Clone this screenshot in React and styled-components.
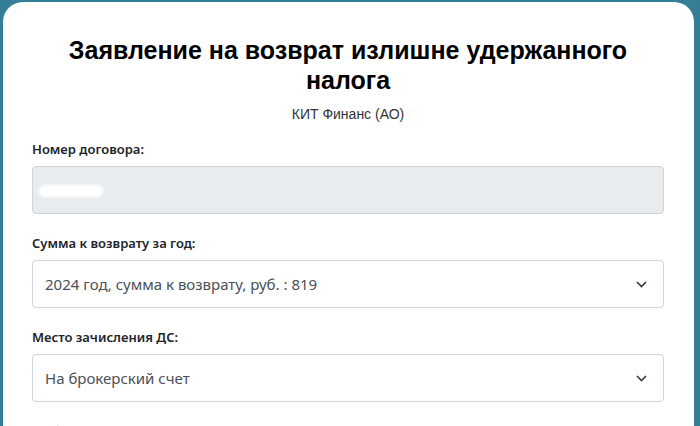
import React from 'react';
import styled, { createGlobalStyle } from 'styled-components';

const GlobalStyle = createGlobalStyle`
  html, body {
    margin: 0;
    padding: 0;
    background: #347f96;
  }
  body {
    font-family: "Noto Sans", "Open Sans", Arial, sans-serif;
  }
`;

const Page = styled.div`
  padding: 2px 6px 0 3px;
`;

const Card = styled.div`
  background: #fff;
  border-radius: 20px 20px 0 0;
  padding: 33px 30px 40px 29px;
  min-height: 600px;
`;

const Title = styled.h1`
  margin: 0;
  font-family: "Liberation Sans", Arial, sans-serif;
  font-size: 25px;
  line-height: 30px;
  font-weight: 700;
  color: #000;
  text-align: center;
`;

const Subtitle = styled.div`
  margin-top: 9px;
  font-family: "Liberation Sans", Arial, sans-serif;
  font-size: 14px;
  line-height: 20px;
  color: #333;
  text-align: center;
`;

const Form = styled.div`
  margin-top: 15px;
  display: flex;
  flex-direction: column;
  gap: 19px;
`;

const Field = styled.div`
  display: flex;
  flex-direction: column;
  gap: 7px;
`;

const Label = styled.label`
  font-size: 13px;
  line-height: 20px;
  font-weight: 600;
  color: #212529;
`;

const Box = styled.div`
  position: relative;
  box-sizing: border-box;
  height: 48px;
  display: flex;
  align-items: center;
  padding: 0 40px 0 12px;
  border: 1px solid #ced4da;
  border-radius: 4px;
  background: ${(p) => (p.$disabled ? '#e9ecef' : '#fff')};
  font-size: 15px;
  color: #495057;
`;

const Redacted = styled.span`
  display: inline-block;
  width: 64px;
  height: 12px;
  margin-left: -6px;
  margin-top: 2px;
  background: #fff;
  border-radius: 6px;
  filter: blur(1.5px);
`;

const Chevron = styled.svg`
  position: absolute;
  right: 16px;
  top: 50%;
  margin-top: -5px;
`;

function Select({ value }) {
  return (
    <Box>
      {value}
      <Chevron width="11" height="10" viewBox="0 0 11 10">
        <path d="M1 3l4.5 4.5L10 3" fill="none" stroke="#343a40" strokeWidth="1.6" />
      </Chevron>
    </Box>
  );
}

export default function App() {
  return (
    <Page>
      <GlobalStyle />
      <Card>
        <Title>
          Заявление на возврат излишне удержанного
          <br />
          налога
        </Title>
        <Subtitle>КИТ Финанс (АО)</Subtitle>
        <Form>
          <Field>
            <Label>Номер договора:</Label>
            <Box $disabled>
              <Redacted />
            </Box>
          </Field>
          <Field>
            <Label>Сумма к возврату за год:</Label>
            <Select value="2024 год, сумма к возврату, руб. : 819" />
          </Field>
          <Field>
            <Label>Место зачисления ДС:</Label>
            <Select value="На брокерский счет" />
          </Field>
          <Field>
            <Label>Выберите Банковский счет:</Label>
            <Select value="" />
          </Field>
        </Form>
      </Card>
    </Page>
  );
}
